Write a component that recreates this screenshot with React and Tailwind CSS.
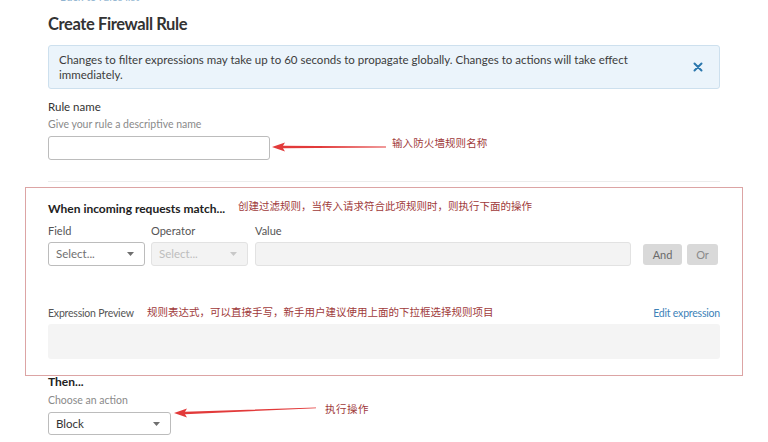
import React from 'react'

const ui = { fontFamily: 'Lato, "Open Sans", sans-serif' }
const cjk = { fontFamily: '"Noto Sans CJK SC", sans-serif' }

function Caret({ light }) {
  return (
    <svg width="7" height="4" viewBox="0 0 7 4" className="shrink-0">
      <path d="M0 0 L7 0 L3.5 4 Z" fill={light ? '#c8c8c8' : '#6f6f6f'} />
    </svg>
  )
}

function Select({ value, disabled, width }) {
  return (
    <div
      className={`flex items-center justify-between h-[24px] px-[7px] pr-[10px] rounded-[3px] border text-[11.5px] ${
        disabled ? 'bg-[#f3f3f3] border-[#e2e2e2] text-[#bdbdbd]' : 'bg-white border-[#bcbcbc] text-[#707070]'
      } ${width}`}
    >
      <span>{value}</span>
      <Caret light={disabled} />
    </div>
  )
}

export default function App() {
  return (
    <div className="relative w-[768px] h-[442px] overflow-hidden bg-white text-[#333]" style={ui}>
      <div className="px-[48px]">
        <div className="-mt-[10px] h-[14px] text-[11px] leading-[14px] text-[#8fb4d0] pl-[12px]">Back to rules list</div>

        <h1 className="mt-[8px] text-[16.5px] leading-[24px] font-bold tracking-[-0.4px] text-[#333]">Create Firewall Rule</h1>

        <div className="mt-[9px] flex items-center justify-between rounded-[3px] border border-[#cde0ee] bg-[#ebf4fb] pl-[10px] pr-[16px] py-[6px]">
          <p className="text-[11.5px] leading-[15px] text-[#3c3c3c] w-[600px]">
            Changes to filter expressions may take up to 60 seconds to propagate globally. Changes to actions will take effect immediately.
          </p>
          <svg width="10" height="10" viewBox="0 0 10 10">
            <path d="M1.5 1.5 L8.5 8.5 M8.5 1.5 L1.5 8.5" stroke="#2b77ad" strokeWidth="2" strokeLinecap="round" />
          </svg>
        </div>

        <div className="mt-[11px] text-[11.5px] leading-[14px] text-[#333]">Rule name</div>
        <div className="mt-[3px] text-[10.5px] leading-[14px] text-[#8a8a8a]">Give your rule a descriptive name</div>
        <div className="mt-[5px] w-[222px] h-[24px] rounded-[3px] border border-[#bcbcbc] bg-white" />

        <div className="mt-[21px] border-t border-[#ececec]" />

        <div className="mt-[20px] text-[12px] leading-[14px] font-bold text-[#222]">When incoming requests match...</div>
        <div className="mt-[8px] flex text-[11px] leading-[14px] text-[#555]">
          <span className="w-[103px]">Field</span>
          <span className="w-[104px]">Operator</span>
          <span>Value</span>
        </div>
        <div className="mt-[4px] flex items-center">
          <Select value="Select..." width="w-[97px]" />
          <div className="w-[6px]" />
          <Select value="Select..." disabled width="w-[97px]" />
          <div className="w-[7px]" />
          <div className="w-[376px] h-[24px] rounded-[3px] border border-[#e2e2e2] bg-[#f3f3f3]" />
          <div className="ml-[12px] flex gap-[5px]">
            <div className="w-[39px] h-[21px] rounded-[3px] bg-[#d9d9d9] text-[11px] leading-[21px] text-center text-[#6a6a6a]">And</div>
            <div className="w-[31px] h-[21px] rounded-[3px] bg-[#d9d9d9] text-[11px] leading-[21px] text-center text-[#8a8a8a]">Or</div>
          </div>
        </div>

        <div className="mt-[40px] flex justify-between text-[10.5px] leading-[14px] tracking-[-0.2px]">
          <span className="text-[#555]">Expression Preview</span>
          <span className="text-[#3d82b8]">Edit expression</span>
        </div>
        <div className="mt-[4px] h-[35px] rounded-[3px] bg-[#f4f4f4]" />

        <div className="mt-[16px] text-[12px] leading-[14px] font-bold text-[#222]">Then...</div>
        <div className="mt-[4px] text-[10.5px] leading-[14px] text-[#8a8a8a]">Choose an action</div>
        <div className="mt-[5px] flex items-center justify-between w-[123px] h-[23px] px-[7px] pr-[10px] rounded-[3px] border border-[#bcbcbc] text-[11.5px] text-[#333]">
          <span>Block</span>
          <Caret />
        </div>
      </div>

      {/* annotations layered over the form */}
      <div className="absolute left-[25px] top-[187px] w-[718px] h-[189px] border border-[#dca4a4]" />

      <svg className="absolute left-[272px] top-[141px]" width="114" height="12" viewBox="0 0 114 12">
        <polygon points="0,6 13,1.5 11,4.8 114,5.4 114,6.4 11,7.2 13,10.5" fill="#e23a3a" />
      </svg>
      <div className="absolute left-[392px] top-[136px] text-[10.5px] leading-[14px] text-[#a03a3a] tracking-[0.1px]" style={cjk}>输入防火墙规则名称</div>

      <div className="absolute left-[238px] top-[199px] text-[10.5px] leading-[14px] text-[#a03a3a]" style={cjk}>创建过滤规则，当传入请求符合此项规则时，则执行下面的操作</div>

      <div className="absolute left-[147px] top-[305px] text-[10.5px] leading-[14px] text-[#a03a3a]" style={cjk}>规则表达式，可以直接手写，新手用户建议使用上面的下拉框选择规则项目</div>

      <svg className="absolute left-[174px] top-[404px]" width="142" height="14" viewBox="0 0 142 14">
        <polygon points="0,9 13,4.5 11,7.8 142,3.5 142,4.3 11,10.2 13,13.5" fill="#e23a3a" />
      </svg>
      <div className="absolute left-[325px] top-[402px] text-[10.5px] leading-[14px] text-[#a03a3a] tracking-[0.5px]" style={cjk}>执行操作</div>
    </div>
  )
}
